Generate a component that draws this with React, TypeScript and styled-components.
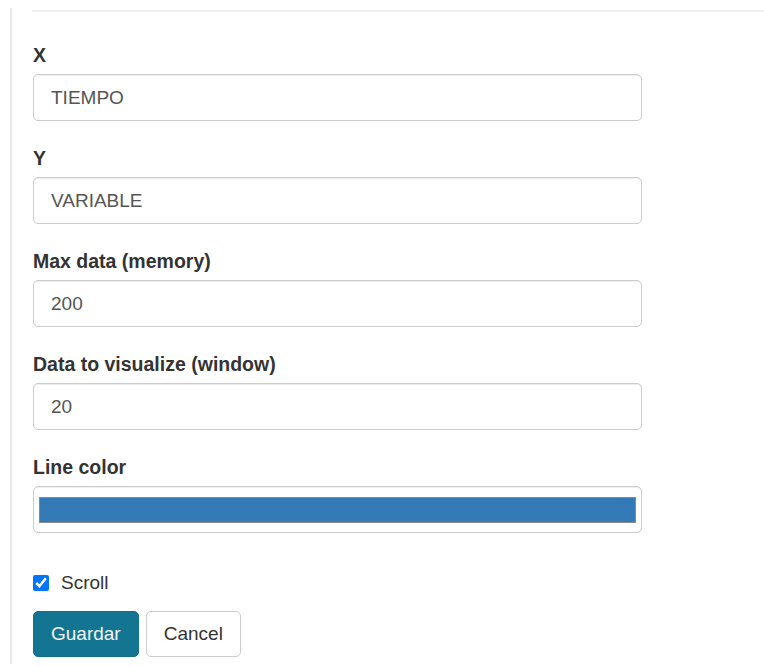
import { useState } from 'react';
import styled, { createGlobalStyle } from 'styled-components';

const GlobalStyle = createGlobalStyle`
	body {
		margin: 0;
		background: #fff;
		font-family: "Liberation Sans", Arial, sans-serif;
		font-size: 19px;
		color: #333;
	}
`;

const Panel = styled.div`
	margin: 8px 0 0 10px;
	padding: 2px 0 0 20px;
	border-left: 2px solid #e8e8e8;
	min-height: 656px;
	box-sizing: border-box;
`;

const Rule = styled.div`
	height: 2px;
	background: #efefef;
`;

const Form = styled.form`
	display: flex;
	flex-direction: column;
	padding: 30px 0 0 1px;
	width: 609px;
`;

const Group = styled.div<{ $last?: boolean }>`
	display: flex;
	flex-direction: column;
	margin-bottom: ${({ $last }) => ($last ? '36px' : '24px')};
`;

const Label = styled.label`
	font-weight: bold;
	font-size: 19.5px;
	line-height: 27px;
	margin-bottom: 5px;
	color: #333;
`;

const Input = styled.input`
	box-sizing: border-box;
	height: 47px;
	padding: 0 17px;
	border: 1px solid #ccc;
	border-radius: 5px;
	box-shadow: inset 0 1px 1px rgba(0, 0, 0, 0.075);
	font: inherit;
	color: #555;
	outline: none;
`;

const ColorInput = styled.input`
	box-sizing: border-box;
	-webkit-appearance: none;
	appearance: none;
	height: 47px;
	width: 100%;
	padding: 10px 5px 9px 5px;
	border: 1px solid #ccc;
	border-radius: 5px;
	box-shadow: inset 0 1px 1px rgba(0, 0, 0, 0.075);
	background: #fff;
	cursor: pointer;

	&::-webkit-color-swatch-wrapper {
		padding: 0;
	}
	&::-webkit-color-swatch {
		border: 1px solid #8a8a8a;
		border-radius: 0;
	}
`;

const CheckRow = styled.label`
	display: flex;
	align-items: center;
	gap: 12px;
	line-height: 27px;
	margin-bottom: 15px;
	color: #333;
`;

const Check = styled.input`
	width: 16px;
	height: 16px;
	margin: 0;
	accent-color: #0075ff;
`;

const Actions = styled.div`
	display: flex;
	gap: 7px;
`;

const Button = styled.button<{ $primary?: boolean }>`
	height: 46px;
	padding: 0 17px;
	border-radius: 5px;
	font: inherit;
	cursor: pointer;
	border: 1px solid ${({ $primary }) => ($primary ? '#10708a' : '#ccc')};
	background: ${({ $primary }) => ($primary ? '#137591' : '#fff')};
	color: ${({ $primary }) => ($primary ? '#f2f6f8' : '#333')};
`;

const App = () => {
	const [x, setX] = useState('TIEMPO');
	const [y, setY] = useState('VARIABLE');
	const [maxData, setMaxData] = useState('200');
	const [windowSize, setWindowSize] = useState('20');
	const [lineColor, setLineColor] = useState('#337ab7');
	const [scroll, setScroll] = useState(true);

	return (
		<Panel>
			<GlobalStyle />
			<Rule />
			<Form onSubmit={e => e.preventDefault()}>
				<Group>
					<Label>X</Label>
					<Input value={x} onChange={e => setX(e.target.value)} />
				</Group>
				<Group>
					<Label>Y</Label>
					<Input value={y} onChange={e => setY(e.target.value)} />
				</Group>
				<Group>
					<Label>Max data (memory)</Label>
					<Input type="number" value={maxData} onChange={e => setMaxData(e.target.value)} />
				</Group>
				<Group>
					<Label>Data to visualize (window)</Label>
					<Input type="number" value={windowSize} onChange={e => setWindowSize(e.target.value)} />
				</Group>
				<Group $last>
					<Label>Line color</Label>
					<ColorInput type="color" value={lineColor} onChange={e => setLineColor(e.target.value)} />
				</Group>
				<CheckRow>
					<Check type="checkbox" checked={scroll} onChange={e => setScroll(e.target.checked)} />
					Scroll
				</CheckRow>
				<Actions>
					<Button $primary type="submit">Guardar</Button>
					<Button type="button">Cancel</Button>
				</Actions>
			</Form>
		</Panel>
	)
}

export default App
